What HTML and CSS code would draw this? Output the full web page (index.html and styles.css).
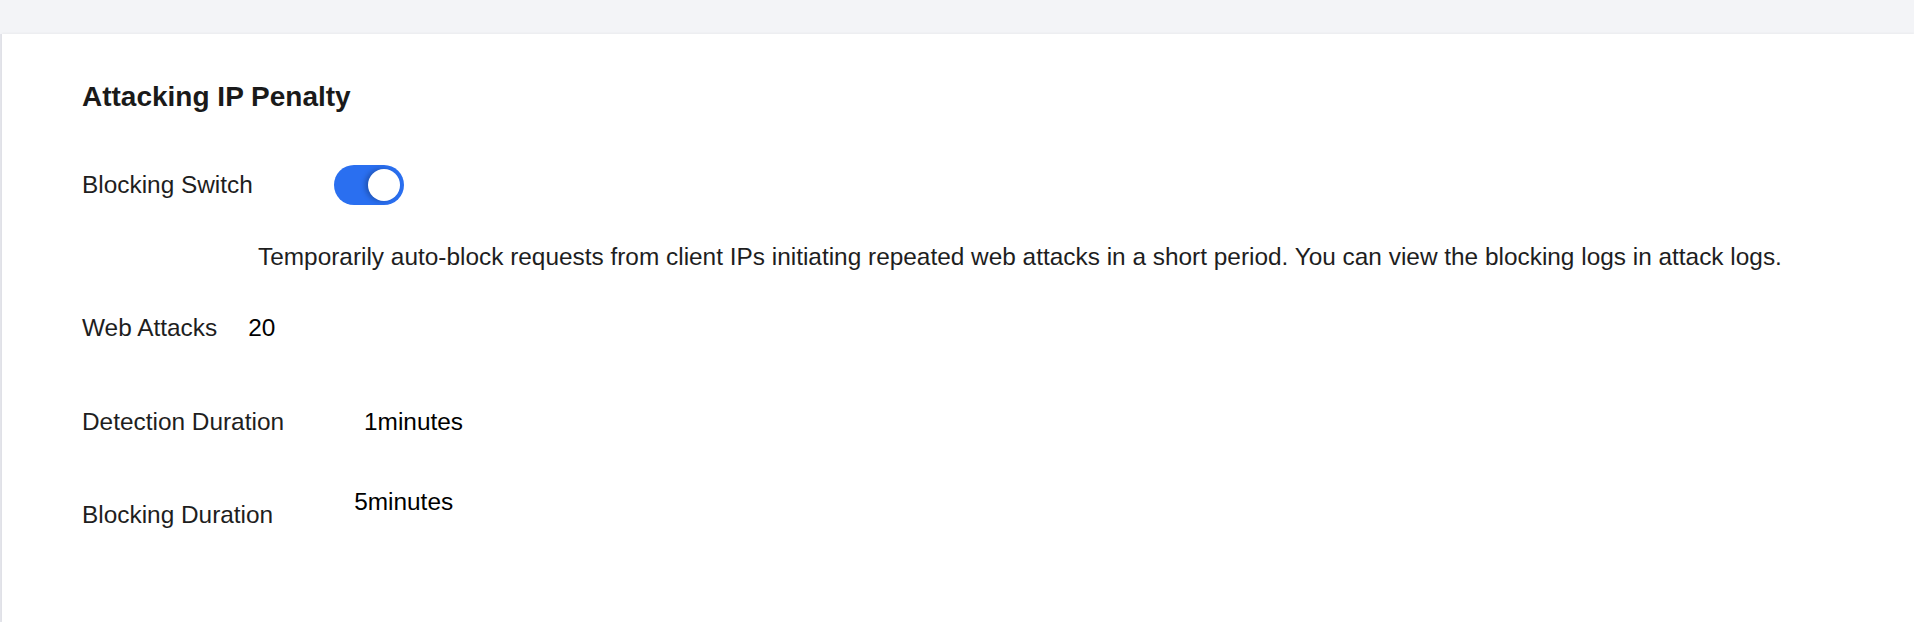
FILE: index.html
```html
<!DOCTYPE html>
<html>
<head>
<meta charset="utf-8">
<link rel="stylesheet" href="styles.css">
</head>
<body>
<div class="topbar"></div>
<div class="page">
  <div class="card">
    <h2 class="title">Attacking IP Penalty</h2>
    <div class="row row-switch">
      <span class="label">Blocking Switch</span>
      <span class="switch"><span class="knob"></span></span>
    </div>
    <p class="desc">Temporarily auto-block requests from client IPs initiating repeated web attacks in a short period. You can view the blocking logs in attack logs.</p>
    <div class="row row-attacks">
      <span class="label">Web Attacks</span>
      <span class="value">20</span>
    </div>
    <div class="row row-detect">
      <span class="label">Detection Duration</span>
      <span class="value">1minutes</span>
    </div>
    <div class="row row-block">
      <span class="label">Blocking Duration</span>
      <span class="value value-raised">5minutes</span>
    </div>
  </div>
</div>
</body>
</html>
```
FILE: styles.css
```css
html, body {
  margin: 0;
  padding: 0;
  height: 100%;
  background: #f3f4f7;
  font-family: "Liberation Sans", Arial, Helvetica, sans-serif;
}
.topbar {
  height: 34px;
  background: #f3f4f7;
}
.page {
  background: #e3e4ea;
  padding-left: 2px;
  height: calc(100% - 34px);
}
.card {
  background: #ffffff;
  height: 100%;
  box-sizing: border-box;
  padding: 0 0 0 80px;
  box-shadow: 0 -1px 2px rgba(0,0,0,0.04);
  overflow: hidden;
}
.title {
  margin: 0;
  padding-top: 48px;
  font-size: 28px;
  line-height: 30px;
  font-weight: bold;
  color: #1a1a1a;
}
.row {
  display: flex;
  align-items: center;
  font-size: 24.4px;
  line-height: 28px;
}
.label {
  color: #1e1e1e;
}
.value {
  color: #000;
}
.row-switch {
  margin-top: 53px;
  height: 40px;
}
.row-switch .switch {
  margin-left: 81px;
}
.switch {
  position: relative;
  width: 70px;
  height: 40px;
  border-radius: 20px;
  background: #2a6ff0;
  display: inline-block;
}
.knob {
  position: absolute;
  top: 4px;
  right: 4px;
  width: 32px;
  height: 32px;
  border-radius: 50%;
  background: #fff;
  box-shadow: -3px 0 5px rgba(0,0,0,0.25);
}
.desc {
  margin: 0;
  margin-top: 38px;
  padding-left: 176px;
  font-size: 24.4px;
  line-height: 28px;
  color: #1e1e1e;
}
.row-attacks {
  margin-top: 43px;
}
.row-attacks .value {
  margin-left: 31px;
}
.row-detect {
  margin-top: 66px;
}
.row-detect .value {
  margin-left: 80px;
}
.row-block {
  margin-top: 52px;
  align-items: flex-start;
}
.row-block .label {
  margin-top: 13px;
}
.row-block .value {
  margin-left: 81px;
}
```
